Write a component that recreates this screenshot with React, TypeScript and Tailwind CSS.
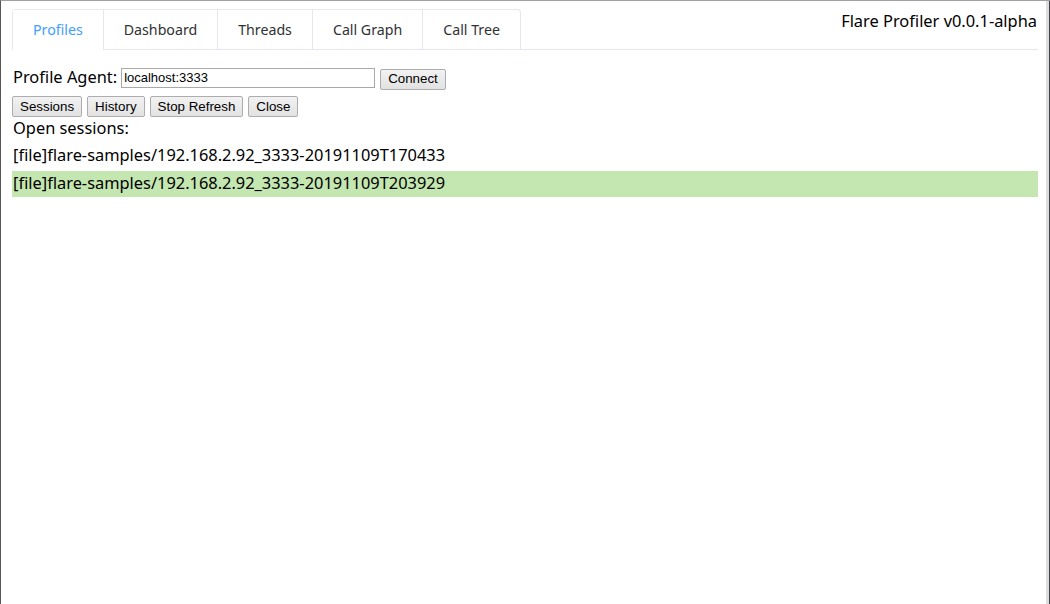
import React from "react";

const tabs = ["Profiles", "Dashboard", "Threads", "Call Graph", "Call Tree"];

function Btn({ children }: { children: React.ReactNode }) {
  return (
    <button className="h-[21px] px-[7px] border border-[#adadad] rounded-[2px] bg-gradient-to-b from-[#f2f2f2] to-[#e2e2e2] text-[13.333px] text-black leading-none font-['Liberation_Sans',Arial,sans-serif]">
      {children}
    </button>
  );
}

export default function App() {
  return (
    <div className="w-[1050px] h-[604px] bg-white border-t border-t-[#a0a0a0] border-l border-l-[#555] flex overflow-hidden font-['Noto_Sans',sans-serif] text-[#111]">
      <div className="flex-1 flex flex-col pl-[11px] pr-[8px] pt-[8px]">
        <div className="flex justify-between items-start border-b border-[#e4e7ed] h-[41px]">
          <div className="flex border border-b-0 border-[#e4e7ed] rounded-t-[4px] h-[41px]">
            {tabs.map((t, i) => (
              <div
                key={t}
                className={
                  "h-[40px] px-[20px] flex items-center pb-[1px] text-[14.2px] " +
                  (i > 0 ? "border-l border-[#e4e7ed] " : "") +
                  (i === 0 ? "text-[#409eff] bg-white h-[41px] border-b border-b-white" : "text-[#303133]")
                }
              >
                {t}
              </div>
            ))}
          </div>
          <div className="pt-[1px] text-[16.4px] text-black leading-[22px] mr-[1px]">Flare Profiler v0.0.1-alpha</div>
        </div>
        <div className="flex items-center mt-[17px] h-[21px]">
          <span className="text-[16.4px] text-black mr-[4px] leading-none pl-[1px]">Profile Agent:</span>
          <input
            defaultValue="localhost:3333"
            className="w-[254px] h-[20px] border border-[#a9a9a9] px-[2px] text-[13px] text-black font-['Liberation_Sans',Arial,sans-serif] outline-none"
          />
          <div className="ml-[5px]">
            <Btn>Connect</Btn>
          </div>
        </div>
        <div className="flex gap-[5px] mt-[8px]">
          <Btn>Sessions</Btn>
          <Btn>History</Btn>
          <Btn>Stop Refresh</Btn>
          <Btn>Close</Btn>
        </div>
        <div className="text-[16.4px] text-black leading-[22px] pl-[1px]">Open sessions:</div>
        <div className="mt-[3px] text-[16.4px] text-black">
          <div className="h-[26px] flex items-center pl-[1px]">[file]flare-samples/192.168.2.92_3333-20191109T170433</div>
          <div className="h-[26px] mt-[3px] flex items-center pb-[2px] pl-[1px] bg-[#c4e6b0]">[file]flare-samples/192.168.2.92_3333-20191109T203929</div>
        </div>
      </div>
      <div className="w-[4px] h-full bg-[#dcdde2] border-r border-r-[#444]"></div>
    </div>
  );
}
